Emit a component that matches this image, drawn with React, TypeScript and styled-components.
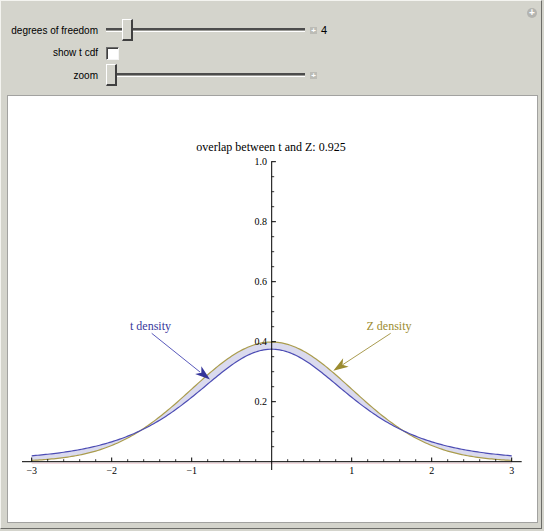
import React from "react";
import styled, { createGlobalStyle } from "styled-components";

const GlobalStyle = createGlobalStyle`
  html, body {
    margin: 0;
    padding: 0;
    background: #d4d4cc;
  }
`;

const Frame = styled.div`
  position: relative;
  box-sizing: border-box;
  width: 542px;
  height: 529px;
  padding-top: 18px;
  background: #d4d4cc;
  border-top: 1px solid #f4f4f0;
  border-left: 1px solid #f4f4f0;
  border-right: 1px solid #6c6c68;
  border-bottom: 1px solid #6c6c68;
  font-family: "Liberation Sans", Arial, sans-serif;
`;

const AddButton = styled.div`
  position: absolute;
  top: 7px;
  right: 4px;
  width: 10px;
  height: 10px;
  border-radius: 50%;
  background: #b4b4b0;
  display: flex;
  align-items: center;
  justify-content: center;
  color: #fff;
  font-size: 10px;
  font-weight: bold;
  line-height: 1;
`;

const Controls = styled.div`
  display: grid;
  grid-template-columns: 97px auto;
  grid-template-rows: 22px 23px 23px;
  column-gap: 8px;
  align-items: center;
`;

const Label = styled.div`
  text-align: right;
  font-size: 10px;
  color: #000;
`;

const ControlCell = styled.div`
  display: flex;
  align-items: center;
  height: 100%;
`;

const Track = styled.div`
  position: relative;
  width: 199px;
  height: 100%;
  &::before {
    content: "";
    position: absolute;
    left: 0;
    right: 0;
    top: 9px;
    height: 1px;
    border-top: 2px solid #4c4c4c;
    border-bottom: 1px solid #fff;
    background: #9a9a96;
  }
`;

const Thumb = styled.div<{ $left: number }>`
  position: absolute;
  top: 0;
  left: ${(p) => p.$left}px;
  box-sizing: border-box;
  width: 11px;
  height: 22px;
  background: #d4d4cc;
  border-top: 1px solid #fff;
  border-left: 1px solid #fff;
  border-right: 2px solid #404040;
  border-bottom: 2px solid #404040;
`;

const Stepper = styled.div`
  width: 7px;
  height: 7px;
  margin-left: 5px;
  background: #bcbcb6;
  color: #fff;
  font-size: 8px;
  font-weight: bold;
  line-height: 7px;
  text-align: center;
`;

const Value = styled.span`
  margin-left: 4px;
  font-size: 11px;
`;

const Checkbox = styled.div`
  box-sizing: border-box;
  width: 13px;
  height: 13px;
  margin-top: 1px;
  background: #fff;
  border-top: 1px solid #6c6c6c;
  border-left: 1px solid #6c6c6c;
  border-right: 1px solid #f4f4f4;
  border-bottom: 1px solid #f4f4f4;
  box-shadow: inset 1px 1px 0 #404040;
`;

const Panel = styled.div`
  box-sizing: border-box;
  width: 531px;
  height: 428px;
  margin: 8px 0 0 6px;
  background: #fff;
  border: 1px solid #a2a2a0;
`;

const Plot = styled.svg`
  display: block;
  font-family: "Liberation Serif", "Times New Roman", serif;
`;

const X = (t: number) => 271.7 + 80 * t;
const Y = (v: number) => 461.7 - 300 * v;
const tPdf = (x: number) => 0.375 * Math.pow(1 + (x * x) / 4, -2.5);
const zPdf = (x: number) => Math.exp((-x * x) / 2) / Math.sqrt(2 * Math.PI);

const samples: number[] = [];
for (let i = 0; i <= 240; i++) samples.push(-3 + (6 * i) / 240);

const line = (f: (x: number) => number) =>
  samples.map((x, i) => `${i ? "L" : "M"}${X(x).toFixed(2)},${Y(f(x)).toFixed(2)}`).join(" ");

const band =
  line(tPdf) +
  " " +
  samples
    .slice()
    .reverse()
    .map((x) => `L${X(x).toFixed(2)},${Y(zPdf(x)).toFixed(2)}`)
    .join(" ") +
  " Z";

const arrowHead = (sx: number, sy: number, tx: number, ty: number) => {
  const dx = tx - sx;
  const dy = ty - sy;
  const len = Math.hypot(dx, dy);
  const ux = dx / len;
  const uy = dy / len;
  const bx = tx - 15 * ux;
  const by = ty - 15 * uy;
  const nx = tx - 11 * ux;
  const ny = ty - 11 * uy;
  const px = -uy * 5;
  const py = ux * 5;
  return `M${tx},${ty} L${bx + px},${by + py} L${nx},${ny} L${bx - px},${by - py} Z`;
};

const xMinor: number[] = [];
for (let i = -15; i <= 15; i++) if (i % 5 !== 0) xMinor.push(i / 5);
const xMajor = [-3, -2, -1, 1, 2, 3];
const yMinor: number[] = [];
for (let i = 1; i <= 20; i++) if (i % 4 !== 0) yMinor.push(i / 20);
const yMajor = [0.2, 0.4, 0.6, 0.8, 1.0];

const Chart = () => (
  <Plot width={529} height={426} viewBox="8 96 529 426">
    <path d={band} fill="#dadaee" stroke="none" />
    <line x1={X(-3)} y1={463.2} x2={X(3)} y2={463.2} stroke="#ecc8d0" strokeWidth={1} />
    <path d={line(zPdf)} fill="none" stroke="#aa9c4c" strokeWidth={1.2} />
    <path d={line(tPdf)} fill="none" stroke="#4c4cb4" strokeWidth={1.2} />

    <line x1={22} y1={461.7} x2={521.7} y2={461.7} stroke="#000" strokeWidth={1} />
    <line x1={271.7} y1={161.2} x2={271.7} y2={470} stroke="#000" strokeWidth={1} />
    {xMinor.map((t) => (
      <line key={`xm${t}`} x1={X(t)} y1={461.7} x2={X(t)} y2={459.2} stroke="#000" strokeWidth={0.8} />
    ))}
    {xMajor.map((t) => (
      <g key={`xM${t}`}>
        <line x1={X(t)} y1={461.7} x2={X(t)} y2={457.5} stroke="#000" strokeWidth={1} />
        <text x={X(t)} y={474} fontSize={10} textAnchor="middle">
          {t < 0 ? `\u2212${-t}` : t}
        </text>
      </g>
    ))}
    {yMinor.map((v) => (
      <line key={`ym${v}`} x1={271.7} y1={Y(v)} x2={274.2} y2={Y(v)} stroke="#000" strokeWidth={0.8} />
    ))}
    {yMajor.map((v) => (
      <g key={`yM${v}`}>
        <line x1={271.7} y1={Y(v)} x2={275.9} y2={Y(v)} stroke="#000" strokeWidth={1} />
        <text x={267} y={Y(v) + 3.5} fontSize={10} textAnchor="end">
          {v.toFixed(1)}
        </text>
      </g>
    ))}

    <text x={271} y={151} fontSize={12} textAnchor="middle">
      overlap between t and Z: 0.925
    </text>

    <text x={130} y={329.5} fontSize={12} fill="#38389c">
      t density
    </text>
    <line x1={151.7} y1={333.3} x2={200} y2={372} stroke="#5a5abc" strokeWidth={1} />
    <path d={arrowHead(151.7, 333.3, 210, 379.5)} fill="#34349a" />

    <text x={366.5} y={329.5} fontSize={12} fill="#9c8c30">
      Z density
    </text>
    <line x1={390.7} y1={333.3} x2={343} y2={364.5} stroke="#aa9c50" strokeWidth={1} />
    <path d={arrowHead(390.7, 333.3, 333.3, 370.7)} fill="#9c8c30" />
  </Plot>
);

export default function App() {
  return (
    <>
      <GlobalStyle />
      <Frame>
        <AddButton>+</AddButton>
        <Controls>
          <Label>degrees of freedom</Label>
          <ControlCell>
            <Track>
              <Thumb $left={16} />
            </Track>
            <Stepper>+</Stepper>
            <Value>4</Value>
          </ControlCell>
          <Label>show t cdf</Label>
          <ControlCell>
            <Checkbox />
          </ControlCell>
          <Label>zoom</Label>
          <ControlCell>
            <Track>
              <Thumb $left={0} />
            </Track>
            <Stepper>+</Stepper>
          </ControlCell>
        </Controls>
        <Panel>
          <Chart />
        </Panel>
      </Frame>
    </>
  );
}
